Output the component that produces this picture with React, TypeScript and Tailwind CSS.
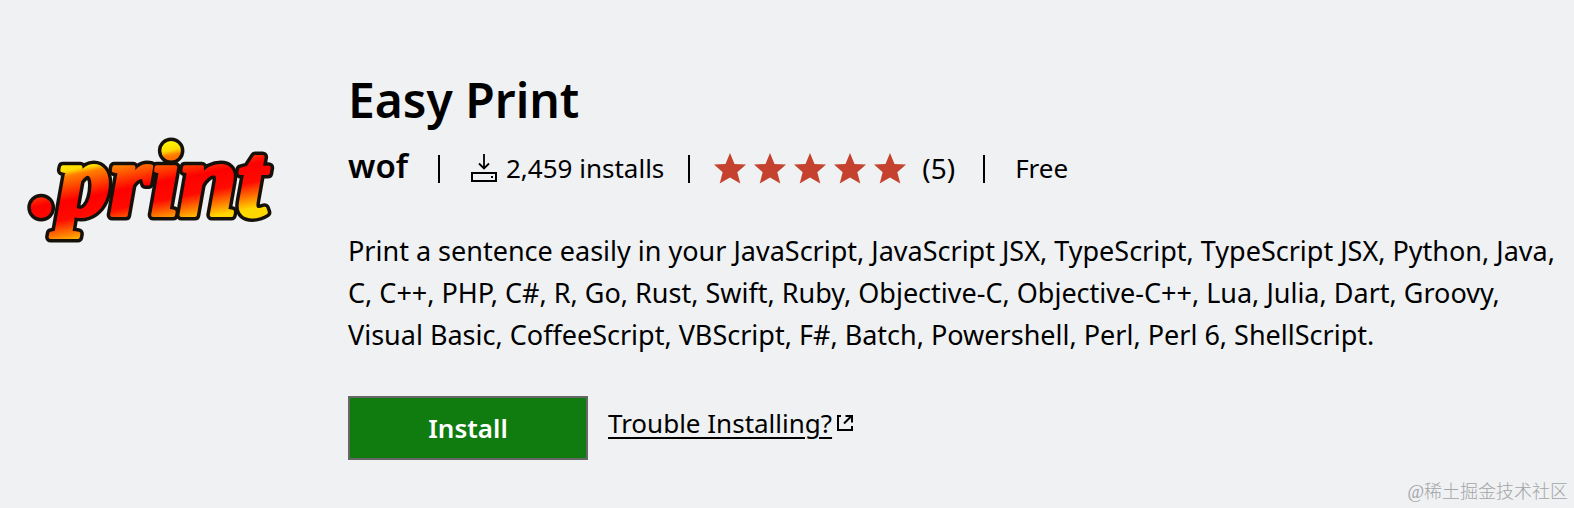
import React from "react";

function Logo() {
  const lettering = {
    x: 32,
    y: 215,
    fontSize: 104,
    fontWeight: 700,
    fontStyle: "italic",
    fontFamily: '"Liberation Serif", serif',
    strokeLinejoin: "round" as const,
  };
  return (
    <svg viewBox="12 112 280 136" className="h-[136px] w-[280px]" role="img" aria-label=".print">
      <defs>
        <linearGradient id="flame" gradientUnits="userSpaceOnUse" x1="80" y1="160" x2="96" y2="240">
          <stop offset="0" stopColor="#fff200" />
          <stop offset="0.1" stopColor="#ffdc00" />
          <stop offset="0.16" stopColor="#ff8000" />
          <stop offset="0.46" stopColor="#ff0000" />
          <stop offset="0.68" stopColor="#ff0a00" />
          <stop offset="1" stopColor="#ffd800" />
        </linearGradient>
      </defs>
      <text {...lettering} fill="#15100a" stroke="#15100a" strokeWidth="11" aria-hidden="true">.print</text>
      <text {...lettering} fill="url(#flame)" stroke="url(#flame)" strokeWidth="4">.print</text>
    </svg>
  );
}

function Divider() {
  return <span className="mt-0.5 h-7 w-0.5 bg-black" aria-hidden="true" />;
}

function InstallsIcon() {
  return (
    <svg viewBox="0 0 28 30" className="h-[30px] w-7" fill="none" stroke="#000" strokeWidth="2" aria-hidden="true">
      <path d="M14 1v14M9 10.5l5 5 5-5" strokeWidth="1.8" />
      <path d="M2 20h24v8H2z" />
      <path d="M21 24h2" />
    </svg>
  );
}

function Star() {
  return (
    <svg viewBox="0 0 32 31" className="h-[31px] w-8" fill="#c5432e" aria-hidden="true">
      <path d="M16 0l4.500 11 11.500.5-8.700 7.700 3 11.300L16 24.500 5.700 30.500l3-11.300L0 11.500l11.500-.5z" />
    </svg>
  );
}

function ExternalIcon() {
  return (
    <svg viewBox="0 0 18 18" className="h-[18px] w-[18px]" fill="none" stroke="#000" strokeWidth="2" aria-hidden="true">
      <path d="M5 2H2v14h14v-4M8 9.500l7.500-7.500M9.500 2H16v6.500" />
    </svg>
  );
}

export default function App() {
  return (
    <div className="bg-[#eff1f3] font-['Noto_Sans',sans-serif] text-[26px] leading-[42px] text-black">
      <main className="flex pt-[68px] pr-3">
        <div className="w-[348px] shrink-0 pt-11 pl-3">
          <Logo />
        </div>
        <div className="min-w-0 flex-1">
          <h1 className="text-[48px] leading-[64px] font-semibold">Easy Print</h1>
          <div className="mt-[15px] flex h-[42px] items-center">
            <span className="mr-[30px] pb-1 text-[33px] font-semibold">wof</span>
            <Divider />
            <span className="mr-6 ml-[30px] flex items-center gap-2">
              <InstallsIcon />
              2,459 installs
            </span>
            <Divider />
            <span className="mr-4 ml-6 flex gap-2" role="img" aria-label="5 out of 5 stars">
              <Star />
              <Star />
              <Star />
              <Star />
              <Star />
            </span>
            <span className="mr-7 text-[28px]">(5)</span>
            <Divider />
            <span className="ml-[30px]">Free</span>
          </div>
          <p className="mt-[41px] text-[27px]">
            Print a sentence easily in your JavaScript, JavaScript JSX, TypeScript, TypeScript JSX, Python, Java, C, C++,
            PHP, C#, R, Go, Rust, Swift, Ruby, Objective-C, Objective-C++, Lua, Julia, Dart, Groovy, Visual Basic,
            CoffeeScript, VBScript, F#, Batch, Powershell, Perl, Perl 6, ShellScript.
          </p>
          <div className="mt-10 flex items-start gap-5">
            <button type="button" className="h-16 w-60 border-2 border-[#666666] bg-[#107c10] font-semibold text-white">
              Install
            </button>
            <a href="#trouble" className="flex items-center gap-1 pt-1.5">
              <span className="underline decoration-2 underline-offset-4">Trouble Installing?</span>
              <ExternalIcon />
            </a>
          </div>
        </div>
      </main>
      <footer className="flex justify-end pt-[18px] pr-1.5 pb-1 font-['Liberation_Serif','Noto_Sans_CJK_SC',serif] text-[18px] leading-7 font-light text-[#a3a4a6]">
        @稀土掘金技术社区
      </footer>
    </div>
  );
}
